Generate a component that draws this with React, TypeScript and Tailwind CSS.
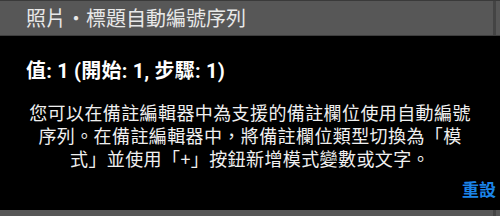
import React from "react";

export default function App() {
  const font = { fontFamily: '"Noto Sans CJK TC", "Noto Sans", sans-serif' };
  return (
    <div className="w-[500px] h-[216px] bg-black flex flex-col overflow-hidden" style={font}>
      <div className="h-[36px] bg-[#575757] border-t border-[#3a3a3a] border-b border-b-[#3e3e3e] flex shrink-0">
        <div className="flex-1 flex items-center pl-[26px] text-[20px] text-[#e8e8e8] leading-none">
          照片・標題自動編號序列
        </div>
        <div className="w-[3px] bg-[#444444]" />
        <div className="w-[4px]" />
      </div>
      <div className="flex-1 flex flex-col">
        <div
          className="pl-[26px] pt-[22px] text-[20px] font-bold text-white leading-[26px] tracking-[0.2px]"
          style={{ fontFamily: 'Roboto, "Noto Sans CJK TC", sans-serif' }}
        >
          值: 1 (開始: 1, 步驟: 1)
        </div>
        <div className="mt-[17px] px-[26px] text-center text-[18px] leading-[23px] text-[#f0f0f0] tracking-[0.4px]">
          您可以在備註編輯器中為支援的備註欄位使用自動編號序列。在備註編輯器中，將備註欄位類型切換為「模式」並使用「+」按鈕新增模式變數或文字。
        </div>
        <div className="flex-1" />
        <div className="flex justify-end pr-[4px] pb-[13px]">
          <span className="text-[17px] font-bold text-[#1b84e8] leading-none">重設</span>
        </div>
      </div>
      <div className="h-[6px] bg-[#575757] flex shrink-0">
        <div className="flex-1" />
        <div className="w-[3px] bg-[#444444]" />
        <div className="w-[4px]" />
      </div>
    </div>
  );
}
